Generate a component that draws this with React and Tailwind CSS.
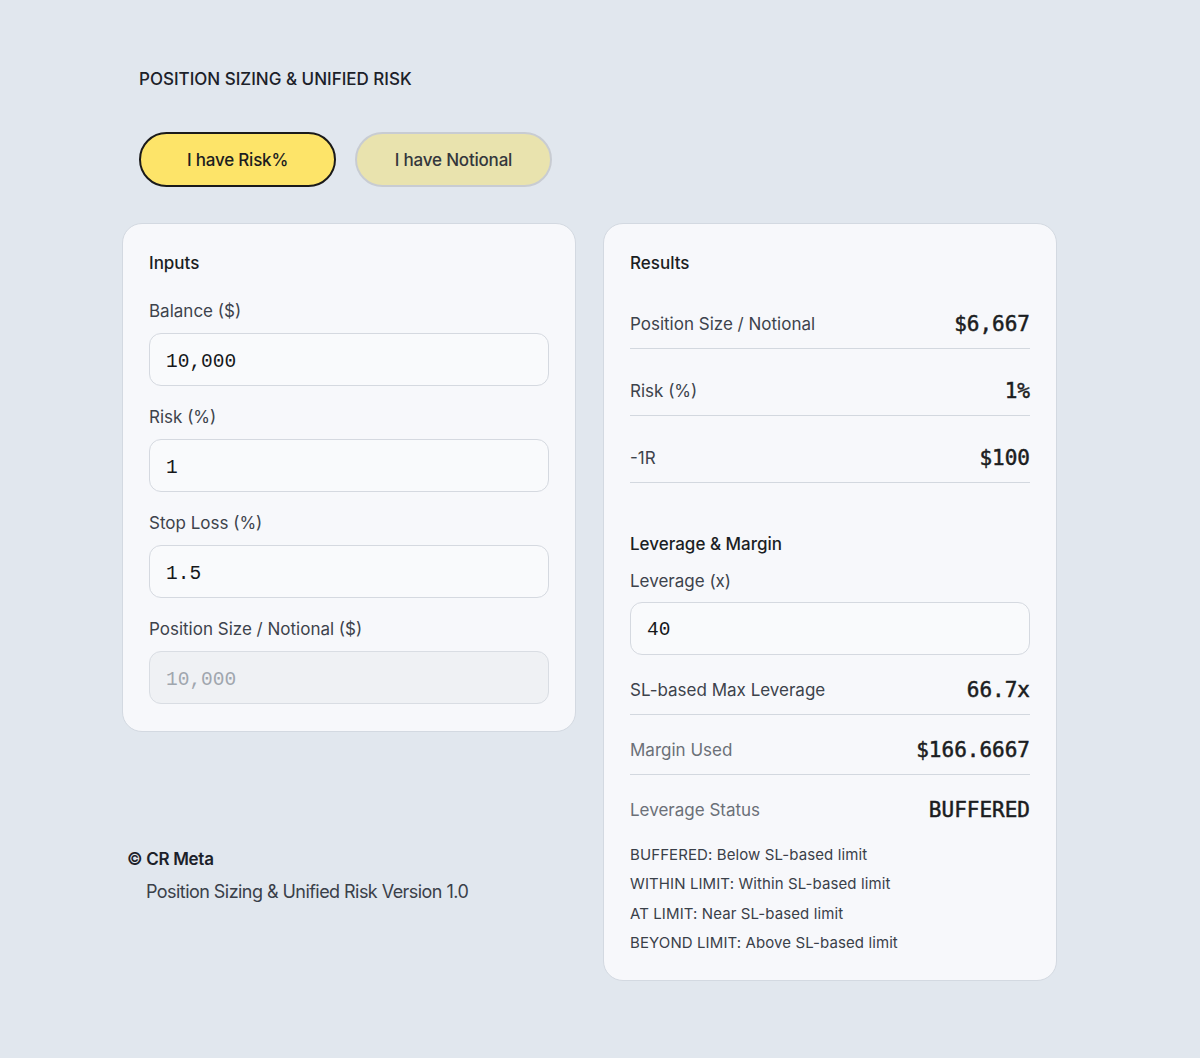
import React from "react";

const sans = "font-['Inter','Noto_Sans',sans-serif]";
const mono = "font-['Liberation_Mono','DejaVu_Sans_Mono',monospace]";
const monoVal = "font-['DejaVu_Sans_Mono','Liberation_Mono',monospace]";

function Field({ label, value, disabled }) {
  return (
    <div className="flex flex-col">
      <div className="text-[17px] leading-[24px] text-[#3d434c]">{label}</div>
      <div
        className={
          "mt-[10px] h-[53px] rounded-[12px] border flex items-center px-[16px] pt-[6px] " +
          (disabled
            ? "bg-[#eff1f4] border-[#d9dde3] text-[#a0a6ae]"
            : "bg-[#f9fafc] border-[#d5d9e0] text-[#15171a]")
        }
      >
        <span className={mono + " text-[19.5px]"}>{value}</span>
      </div>
    </div>
  );
}

function Row({ label, value, muted, border = true, pt = "pt-[28px]" }) {
  return (
    <div
      className={
        "flex items-end justify-between pb-[10px] " +
        pt +
        (border ? " border-b border-[#d3d8df]" : "")
      }
    >
      <span
        className={
          "text-[17px] leading-[28px] " +
          (muted ? "text-[#6b7078]" : "text-[#3d434c]")
        }
      >
        {label}
      </span>
      <span
        className={
          monoVal +
          " text-[21px] leading-[28px] font-normal text-[#1b1d21] [-webkit-text-stroke:0.5px_#1b1d21]"
        }
      >
        {value}
      </span>
    </div>
  );
}

export default function App() {
  return (
    <div className={sans + " min-h-[1058px] w-full bg-[#e1e7ee] text-[#1f2328]"}>
      <div className="pl-[122px] pt-[67px]">
        <div className="pl-[17px] text-[17px] leading-[24px] font-medium text-[#1c2129]">
          POSITION SIZING &amp; UNIFIED RISK
        </div>
        <div className="pl-[17px] mt-[41px] flex gap-[19px]">
          <button className="w-[197px] h-[55px] rounded-full bg-[#fde469] border-2 border-[#1a1a1a] text-[17px] font-medium text-[#1c1d1f] tracking-[-0.2px] pt-[2px]">
            I have Risk%
          </button>
          <button className="w-[197px] h-[55px] rounded-full bg-[#e9e3ae] border-2 border-[#c8ccd2] text-[17px] font-medium text-[#34373c] tracking-[-0.2px] pt-[2px]">
            I have Notional
          </button>
        </div>

        <div className="mt-[36px] flex gap-[28px] items-start">
          <div className="w-[454px] flex flex-col">
            <div className="rounded-[20px] border border-[#d3d9e1] bg-[#f7f8fb] px-[26px] pt-[27px] pb-[27px]">
              <div className="text-[17px] leading-[24px] font-medium text-[#1b1e23]">Inputs</div>
              <div className="mt-[24px] flex flex-col gap-[19px]">
                <Field label="Balance ($)" value="10,000" />
                <Field label="Risk (%)" value="1" />
                <Field label="Stop Loss (%)" value="1.5" />
                <Field label="Position Size / Notional ($)" value="10,000" disabled />
              </div>
            </div>
            <div className="mt-[115px] pl-[5px]">
              <div className="text-[17px] leading-[24px] font-semibold text-[#1c2129] tracking-[-0.3px]">© CR Meta</div>
              <div className="mt-[9px] pl-[19px] text-[18px] leading-[24px] text-[#3a4049] tracking-[-0.55px]">
                Position Sizing &amp; Unified Risk Version 1.0
              </div>
            </div>
          </div>

          <div className="w-[454px] -ml-[1px] rounded-[20px] border border-[#d3d9e1] bg-[#f7f8fb] px-[26px] pt-[27px] pb-[23px]">
            <div className="text-[17px] leading-[24px] font-medium text-[#1b1e23]">Results</div>
            <div className="mt-[7px]">
              <Row label="Position Size / Notional" value="$6,667" />
              <Row label="Risk (%)" value="1%" />
              <Row label="-1R" value="$100" />
            </div>
            <div className="mt-[49px] text-[17px] leading-[24px] font-medium text-[#1b1e23]">
              Leverage &amp; Margin
            </div>
            <div className="mt-[13px] text-[17px] leading-[24px] text-[#3d434c]">Leverage (x)</div>
            <div className="mt-[9px] h-[53px] rounded-[12px] border border-[#d5d9e0] bg-[#f9fafc] flex items-center px-[16px] pt-[5px]">
              <span className={mono + " text-[19.5px] text-[#15171a]"}>40</span>
            </div>
            <Row label="SL-based Max Leverage" value="66.7x" pt="pt-[21px]" />
            <Row label="Margin Used" value="$166.6667" muted pt="pt-[21px]" />
            <Row label="Leverage Status" value="BUFFERED" muted border={false} pt="pt-[21px]" />
            <div className="mt-[6px] flex flex-col text-[15px] leading-[29.3px] text-[#3a4049] tracking-[0.1px]">
              <div>BUFFERED: Below SL-based limit</div>
              <div>WITHIN LIMIT: Within SL-based limit</div>
              <div>AT LIMIT: Near SL-based limit</div>
              <div>BEYOND LIMIT: Above SL-based limit</div>
            </div>
          </div>
        </div>
      </div>
    </div>
  );
}
